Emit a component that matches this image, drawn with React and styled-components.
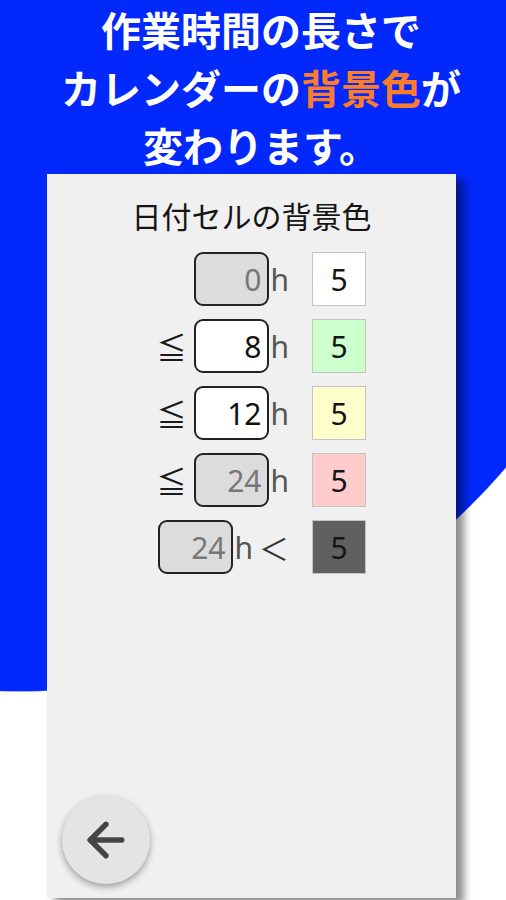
import styled, { createGlobalStyle } from "styled-components";
import { ArrowLeft } from "lucide-react";

/* Data ---------------------------*/
const rows = [
    { sign: "", hours: "0", disabled: true, color: "#ffffff" },
    { sign: "≦", hours: "8", disabled: false, color: "#ccffcc" },
    { sign: "≦", hours: "12", disabled: false, color: "#ffffcc" },
    { sign: "≦", hours: "24", disabled: true, color: "#ffcccc" },
    { sign: "", hours: "24", disabled: true, color: "#606060", over: true },
];

const GlobalStyle = createGlobalStyle`
    html, body {
        margin: 0;
        padding: 0;
        background: #ffffff;
    }
    body {
        font-family: "Noto Sans", "Noto Sans CJK JP", sans-serif;
    }
`;

const App = () => {
    return (
        <>
            <GlobalStyle />
            <Page>
                <Headline>
                    作業時間の長さで
                    <br />
                    カレンダーの<Accent>背景色</Accent>が
                    <br />
                    変わります。
                </Headline>

                <Panel>
                    <Title>日付セルの背景色</Title>

                    <RowList>
                        {rows.map((row, i) => (
                            <Row key={i}>
                                <Limit>
                                    {row.sign && <Sign>{row.sign}</Sign>}
                                    <HourBox $disabled={row.disabled}>
                                        {row.hours}
                                    </HourBox>
                                    <Unit>h</Unit>
                                    {row.over && <Less>＜</Less>}
                                </Limit>
                                <Swatch $bg={row.color}>5</Swatch>
                            </Row>
                        ))}
                    </RowList>

                    <BackButton type="button" aria-label="back">
                        <ArrowLeft size={54} strokeWidth={2.4} color="#454545" />
                    </BackButton>
                </Panel>
            </Page>
        </>
    );
};

export default App;

const Page = styled.div`
    width: 506px;
    height: 900px;
    overflow: hidden;
    background: radial-gradient(
        circle 640px at 20px 52px,
        #0328fb 99.8%,
        #ffffff 100%
    );
`;

const Headline = styled.h1`
    margin: 0;
    height: 174px;
    padding-left: 16px;
    text-align: center;
    font-family: "Noto Sans CJK JP", sans-serif;
    font-size: 40px;
    font-weight: 700;
    line-height: 58px;
    color: #ffffff;
`;

const Accent = styled.span`
    color: #fb7d2b;
`;

const Panel = styled.div`
    margin-left: 47px;
    width: 409px;
    height: 724px;
    background: #f0f0f0;
    box-shadow: 8px 6px 8px rgba(0, 0, 0, 0.45);
    display: flex;
    flex-direction: column;
    box-sizing: border-box;
    padding: 21px 0 14px;
`;

const Title = styled.div`
    text-align: center;
    font-family: "Noto Sans CJK JP", sans-serif;
    font-size: 30px;
    line-height: 40px;
    color: #151515;
    margin-bottom: 17px;
`;

const RowList = styled.div`
    display: flex;
    flex-direction: column;
    gap: 13px;
`;

const Row = styled.div`
    display: grid;
    grid-template-columns: 140px 54px;
    column-gap: 23px;
    padding-left: 102px;
    align-items: center;
`;

const Limit = styled.div`
    display: flex;
    justify-content: flex-end;
    align-items: center;
    font-size: 30px;
`;

const Sign = styled.span`
    font-family: "Noto Sans CJK JP", sans-serif;
    font-size: 30px;
    color: #1a1a1a;
    margin-right: 8px;
`;

const HourBox = styled.div`
    width: 75px;
    height: 54px;
    box-sizing: border-box;
    border: 2px solid #222;
    border-radius: 9px;
    background: ${(p) => (p.$disabled ? "#dcdcdc" : "#ffffff")};
    color: ${(p) => (p.$disabled ? "#777" : "#111")};
    display: flex;
    align-items: center;
    justify-content: flex-end;
    padding-right: 6px;
    font-size: 30px;
`;

const Unit = styled.span`
    color: #555;
    font-size: 30px;
    margin-left: 1px;
`;

const Less = styled.span`
    font-family: "Noto Sans CJK JP", sans-serif;
    color: #333;
    font-size: 30px;
    margin-left: 6px;
`;

const Swatch = styled.div`
    width: 54px;
    height: 54px;
    box-sizing: border-box;
    border: 1px solid #c4c4c4;
    background: ${(p) => p.$bg};
    display: flex;
    align-items: center;
    justify-content: center;
    font-size: 30px;
    color: #151515;
`;

const BackButton = styled.button`
    margin-top: auto;
    margin-left: 15px;
    width: 88px;
    height: 88px;
    border-radius: 50%;
    border: none;
    background: #e4e4e4;
    box-shadow: 0 3px 7px rgba(0, 0, 0, 0.35);
    display: flex;
    align-items: center;
    justify-content: center;
    padding: 0;
    cursor: pointer;
`;
